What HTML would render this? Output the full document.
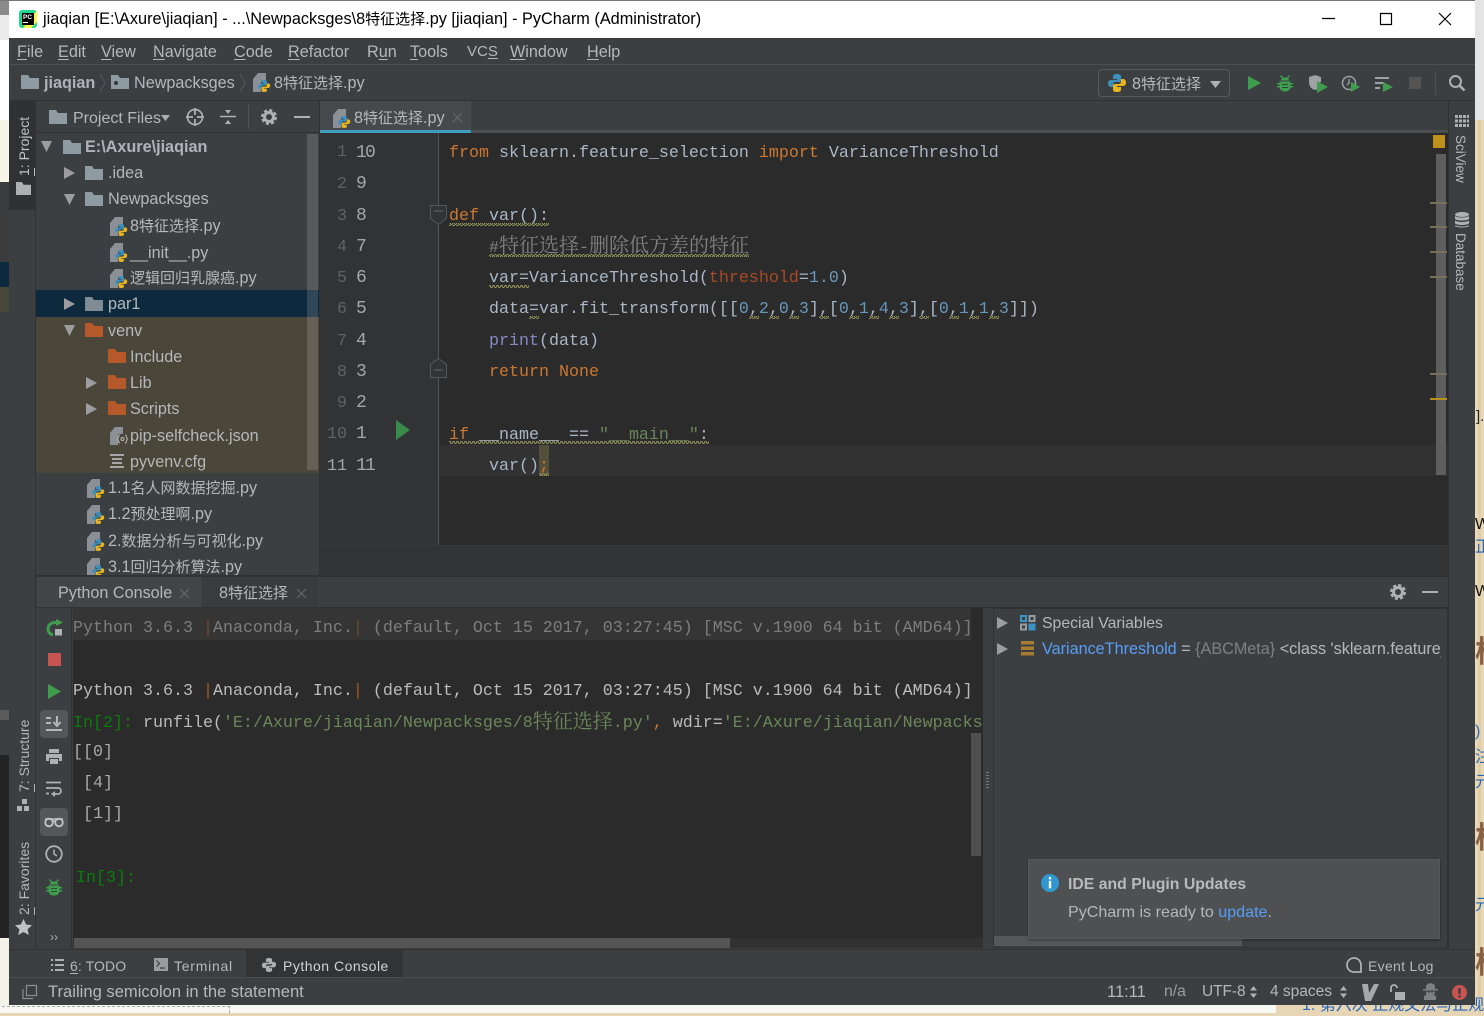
<!DOCTYPE html>
<html><head><meta charset="utf-8"><style>
html,body{margin:0;padding:0;width:1484px;height:1013px;overflow:hidden;background:#e6d6b6}
*{box-sizing:border-box}
.b{position:absolute}
.t{position:absolute;white-space:pre;height:20px;font:16.2px/20px "Liberation Sans","Noto Sans CJK SC",sans-serif;color:#b4b8ba}
.t b.z,.z{font-size:15px;font-weight:normal}
.m{position:absolute;white-space:pre;font:16.67px/20px "Liberation Mono","Noto Serif CJK SC",monospace;height:20px;color:#a9b7c6}
.m i{font:20px/20px "Noto Serif CJK SC",serif;font-style:normal;position:relative}
.r{font-size:18px;letter-spacing:-1.8px;color:#a4a6a8}
.k{color:#cc7832}.s{color:#6a8759}.c{color:#808080}.n{color:#6897bb}.p{color:#aa4926}.f{color:#8888c6}
.g{color:#0b7d0b}
u{text-underline-offset:2px}
svg.i{position:absolute;overflow:visible}
.v{position:absolute;writing-mode:vertical-rl;white-space:pre;font:14px/16px "Liberation Sans",sans-serif;color:#b4b8ba}
.l{transform:rotate(180deg)}
.e{position:absolute;white-space:pre;left:1476px;font:16px/20px "Liberation Sans","Noto Sans CJK SC",sans-serif;color:#2a66b8}
.h{position:absolute;left:1475px;font:bold 30px/30px "Noto Sans CJK SC",sans-serif;color:#8a6045;white-space:pre}
</style></head><body>
<svg width="0" height="0" style="position:absolute"><defs>
<symbol id="fo" viewBox="0 0 18 14"><path d="M0 0h7l2 3h9v11H0z" fill="currentColor"/></symbol>
<symbol id="ri" viewBox="0 0 11 12"><path d="M0 0l11 6-11 6z" fill="#9b9da0"/></symbol>
<symbol id="dn" viewBox="0 0 11 11"><path d="M0 0h11l-5.500 11z" fill="#9b9da0"/></symbol>
<symbol id="lo" viewBox="0 0 18 18"><path d="M9 0c-3 0-4 1-4 2.500V5h4v1H3C1 6 0 7.500 0 9.500S1 13 3 13h2v-2.500C5 9 6 8 7.500 8h4C12.500 8 13 7.200 13 6V2.500C13 1 12 0 9 0z" fill="#3d8fbd"/><path d="M9 18c3 0 4-1 4-2.500V13H9v-1h6c2 0 3-1.500 3-3.500S17 5 15 5h-2v2.500C13 9 12 10 10.500 10h-4C5.500 10 5 10.800 5 12v3.500C5 17 6 18 9 18z" fill="#e8b420"/></symbol>
<symbol id="py" viewBox="0 0 18 19"><path d="M0 6l5-6h8v8H8v11H0z" fill="#8b9096"/><use href="#lo" x="5" y="7" width="12.500" height="12"/></symbol>
<symbol id="ge" viewBox="0 0 16 16"><circle cx="8" cy="8" r="4.500" fill="none" stroke="#aeb1b3" stroke-width="3"/><circle cx="8" cy="8" r="6.800" fill="none" stroke="#aeb1b3" stroke-width="2.400" stroke-dasharray="3.200 2.140"/></symbol>
<symbol id="bug" viewBox="0 0 16 17"><path d="M4 0l2 2.500h4L12 0l1 1-2 2.500 1.500 2H3.500L5 3.500 3 1zM2.500 6.500h11V8H16v1.500h-2.500V11H16v1.500h-2.500c-.5 2.500-2.500 4-5.500 4s-5-1.500-5.500-4H0V11h2.500V9.500H0V8h2.500z" fill="#3f9e4d"/><path d="M5 9h6v1H5zM5 12h6v1H5z" fill="#2f4a36"/></symbol>
<pattern id="w" width="4" height="3" patternUnits="userSpaceOnUse"><path d="M0 2.500L1 .5 2 .5 3 2.500 4 2.500" fill="none" stroke="#98985a" stroke-width="1"/></pattern>
</defs></svg>

<!-- background -->
<div class="b" style="left:0;top:0;width:9px;height:1013px;background:#3c3f41"></div>
<div class="b" style="left:0;top:0;width:9px;height:15px;background:#8a8a8a"></div>
<div class="b" style="left:0;top:15px;width:9px;height:25px;background:#ececec"></div>
<div class="b" style="left:0;top:40px;width:9px;height:80px;background:#fff"></div>
<div class="b" style="left:0;top:120px;width:9px;height:62px;background:#f8f4e8"></div>
<div class="b" style="left:0;top:182px;width:9px;height:80px;background:#3a3c3e"></div>
<div class="b" style="left:0;top:262px;width:9px;height:25px;background:#0d293e"></div>
<div class="b" style="left:0;top:287px;width:9px;height:25px;background:#4b463a"></div>
<div class="b" style="left:0;top:710px;width:9px;height:10px;background:#5a5a5a"></div>
<div class="b" style="left:0;top:755px;width:9px;height:183px;background:#232425"></div>
<div class="b" style="left:0;top:938px;width:9px;height:75px;background:#f4f2e6"></div>
<div class="b" style="left:0;top:1005px;width:1276px;height:8px;background:#f8f8f2"></div>
<div class="b" style="left:2px;top:1006px;width:228px;height:7px;border-top:1px dashed #aaa;border-right:1px dashed #aaa"></div>
<div class="b" style="left:1276px;top:1005px;width:208px;height:8px;background:#e6d6b6"></div>
<div class="b" style="left:1475px;top:0;width:9px;height:120px;background:#e4e4e4"></div>
<div class="b" style="left:1475px;top:120px;width:9px;height:893px;background:repeating-linear-gradient(90deg,#e8d8b8 0 3px,#dfcfa9 3px 6px);overflow:hidden"></div>
<div class="e" style="top:407px;color:#222;left:1476px;font-size:15px">].</div>
<div class="e" style="top:515px;color:#111;left:1475px">W</div>
<div class="e" style="top:538px;left:1475px">正</div>
<div class="e" style="top:582px;color:#111;left:1475px">W</div>
<div class="h" style="top:634px">校</div>
<div class="e" style="top:722px;left:1475px">)</div>
<div class="e" style="top:748px;left:1475px">注</div>
<div class="e" style="top:773px;left:1475px">元</div>
<div class="h" style="top:820px">校</div>
<div class="e" style="top:896px;left:1475px">元</div>
<div class="h" style="top:945px">校</div>
<div class="t" style="left:1302px;top:996px;color:#2a66b8;font-size:16px">1. 第六次 正规文法与正规式</div>

<!-- window -->
<div class="b" style="left:9px;top:0;width:1466px;height:1005px;background:#3c3f41"></div>
<div class="b" style="left:9px;top:1px;width:1466px;height:37px;background:#fff"></div>
<div class="b" style="left:0;top:0;width:1475px;height:1px;background:#777"></div>
<svg class="i" style="left:19px;top:10px" width="18" height="18" viewBox="0 0 18 18"><rect x="0" y="0" width="18" height="18" rx="3" fill="#22d88f"/><path d="M18 0v12l-6 6H4z" fill="#fcf84a"/><rect x="3" y="3" width="12" height="12" fill="#000"/><text x="4" y="9" font-size="6.500" font-weight="bold" fill="#fff" font-family="Liberation Sans">PC</text><rect x="4" y="12" width="5" height="1" fill="#fff"/></svg>
<div class="t" style="left:43px;top:9px;color:#000;font-size:16.300px">jiaqian [E:\Axure\jiaqian] - ...\Newpacksges\8<span class="z">特征选择</span>.py [jiaqian] - PyCharm (Administrator)</div>
<svg class="i" style="left:1320px;top:10px" width="135" height="18"><path d="M2 8.500h13M60.500 3.500h11v11h-11zM119 3l12 12M131 3l-12 12" fill="none" stroke="#000" stroke-width="1.200"/></svg>

<!-- menu -->
<div class="b" style="left:9px;top:64px;width:1466px;height:1px;background:#4e4e4e"></div>
<div class="t" style="left:17px;top:42px"><u>F</u>ile</div>
<div class="t" style="left:58px;top:42px"><u>E</u>dit</div>
<div class="t" style="left:101px;top:42px"><u>V</u>iew</div>
<div class="t" style="left:153px;top:42px"><u>N</u>avigate</div>
<div class="t" style="left:234px;top:42px"><u>C</u>ode</div>
<div class="t" style="left:288px;top:42px"><u>R</u>efactor</div>
<div class="t" style="left:367px;top:42px">R<u>u</u>n</div>
<div class="t" style="left:410px;top:42px"><u>T</u>ools</div>
<div class="t" style="left:467px;top:42px;font-size:15px">VC<u>S</u></div>
<div class="t" style="left:510px;top:42px"><u>W</u>indow</div>
<div class="t" style="left:587px;top:42px"><u>H</u>elp</div>

<!-- nav bar -->
<div class="b" style="left:9px;top:100px;width:1466px;height:1px;background:#323232"></div>
<svg class="i" style="left:21px;top:75px;color:#8e9ba3" width="18" height="14"><use href="#fo"/></svg>
<div class="t" style="left:44px;top:73px;font-weight:bold;color:#aeb3b7">jiaqian</div>
<svg class="i" style="left:99px;top:73px" width="8" height="20"><path d="M1 1l5 9-5 9" fill="none" stroke="#55585a"/></svg>
<svg class="i" style="left:111px;top:75px;color:#8e9ba3" width="18" height="14"><use href="#fo"/><rect x="3" y="6" width="4" height="4" rx="2" fill="#33363a"/></svg>
<div class="t" style="left:134px;top:73px">Newpacksges</div>
<svg class="i" style="left:239px;top:73px" width="8" height="20"><path d="M1 1l5 9-5 9" fill="none" stroke="#55585a"/></svg>
<svg class="i" style="left:253px;top:73px" width="18" height="19"><use href="#py"/></svg>
<div class="t" style="left:274px;top:73px">8<span class="z">特征选择</span>.py</div>

<div class="b" style="left:1098px;top:69px;width:132px;height:28px;border:1px solid #565a5d;border-radius:4px"></div>
<svg class="i" style="left:1108px;top:74px" width="18" height="18"><use href="#lo"/></svg>
<div class="t" style="left:1132px;top:74px">8<span class="z">特征选择</span></div>
<svg class="i" style="left:1210px;top:81px" width="11" height="7"><path d="M0 0h11L5.500 7z" fill="#aeb1b3"/></svg>
<svg class="i" style="left:1248px;top:76px" width="13" height="14"><path d="M0 0l13 7-13 7z" fill="#3f9e4d"/></svg>
<svg class="i" style="left:1277px;top:75px" width="16" height="17"><use href="#bug"/></svg>
<svg class="i" style="left:1309px;top:75px" width="20" height="18"><path d="M0 2l6-2 6 2v5l-3 1v6L6 15C2 14 0 11 0 7z" fill="#9ea2a4"/><path d="M8 7l11 6-11 6z" transform="translate(0,-1)" fill="#3f9e4d"/></svg>
<svg class="i" style="left:1341px;top:75px" width="20" height="18"><circle cx="8" cy="8" r="6.500" fill="none" stroke="#9ea2a4" stroke-width="1.500"/><path d="M8 4v4l-2 2" stroke="#9ea2a4" fill="none" stroke-width="1.300"/><path d="M10 7l9 5-9 5z" fill="#3f9e4d"/></svg>
<svg class="i" style="left:1375px;top:76px" width="18" height="17"><path d="M0 1h14v2H0zM0 6h9v2H0zM0 11h5v2H0z" fill="#9ea2a4"/><path d="M8 6l10 5-10 5z" fill="#3f9e4d"/></svg>
<div class="b" style="left:1409px;top:77px;width:12px;height:12px;background:#545454"></div>
<div class="b" style="left:1435px;top:71px;width:1px;height:24px;background:#4e5153"></div>
<svg class="i" style="left:1448px;top:74px" width="18" height="18"><circle cx="7.500" cy="7.500" r="5.500" fill="none" stroke="#aeb1b3" stroke-width="2"/><path d="M11.500 11.500l5 5" stroke="#aeb1b3" stroke-width="2.500"/></svg>

<!-- left tool strip -->
<div class="b" style="left:9px;top:101px;width:27px;height:849px;background:#3c3f41;border-right:1px solid #323232"></div>
<div class="b" style="left:9px;top:101px;width:26px;height:109px;background:#2f3133"></div>
<div class="v l" style="left:16px;top:116px;height:60px;color:#c0c2c4"><u>1</u>: Project</div>
<svg class="i" style="left:16px;top:182px;color:#aeb1b3" width="15" height="13" viewBox="0 0 18 14" preserveAspectRatio="none"><use href="#fo"/></svg>
<div class="v l" style="left:16px;top:720px;height:72px"><u>7</u>: Structure</div>
<svg class="i" style="left:17px;top:799px" width="13" height="13"><path d="M5 0h5v5H5zM0 7h5v5H0zM7 7h5v5H7z" fill="#aeb1b3"/></svg>
<div class="v l" style="left:16px;top:845px;height:70px"><u>2</u>: Favorites</div>
<svg class="i" style="left:15px;top:919px" width="17" height="16"><path d="M8.500 0l2.600 5.500 5.900.700-4.400 4 1.200 5.800-5.300-3-5.300 3 1.200-5.800-4.400-4 5.900-.7z" fill="#c0c2c4"/></svg>

<!-- project header -->
<div class="b" style="left:36px;top:132px;width:284px;height:1px;background:#323232"></div>
<svg class="i" style="left:49px;top:110px;color:#8e9ba3" width="18" height="14"><use href="#fo"/></svg>
<div class="t" style="left:73px;top:109px;font-size:16px">Project Files</div>
<svg class="i" style="left:161px;top:115px" width="9" height="6"><path d="M0 0h9L4.500 6z" fill="#aeb1b3"/></svg>
<svg class="i" style="left:186px;top:108px" width="18" height="18"><circle cx="9" cy="9" r="7.500" fill="none" stroke="#aeb1b3" stroke-width="1.700"/><path d="M9 0v7M9 11v7M0 9h7M11 9h7" stroke="#aeb1b3" stroke-width="1.700"/></svg>
<svg class="i" style="left:220px;top:109px" width="16" height="16"><path d="M0 7.500h16" stroke="#aeb1b3" stroke-width="1.500"/><path d="M5 1h6l-3 4zM5 15h6l-3-4z" fill="#aeb1b3"/></svg>
<div class="b" style="left:248px;top:105px;width:1px;height:24px;background:#505355"></div>
<svg class="i" style="left:261px;top:109px" width="16" height="16"><use href="#ge"/></svg>
<div class="b" style="left:294px;top:116px;width:16px;height:2px;background:#aeb1b3"></div>

<!-- tree -->
<div class="b" style="left:36px;top:290px;width:283px;height:27px;background:#0d293e"></div>
<div class="b" style="left:36px;top:317px;width:283px;height:156px;background:#4b463a"></div>
<div class="b" style="left:307px;top:134px;width:11px;height:336px;background:rgba(255,255,255,.14)"></div>
<svg class="i" style="left:41px;top:141px" width="11" height="11"><use href="#dn"/></svg>
<svg class="i" style="left:63px;top:140px;color:#8e9ba3" width="18" height="14"><use href="#fo"/></svg>
<div class="t" style="left:85px;top:137px;font-weight:bold;color:#b0b4b8">E:\Axure\jiaqian</div>
<svg class="i" style="left:64px;top:167px" width="11" height="12"><use href="#ri"/></svg>
<svg class="i" style="left:85px;top:166px;color:#8e9ba3" width="18" height="14"><use href="#fo"/></svg>
<div class="t" style="left:108px;top:163px">.idea</div>
<svg class="i" style="left:64px;top:194px" width="11" height="11"><use href="#dn"/></svg>
<svg class="i" style="left:85px;top:192px;color:#8e9ba3" width="18" height="14"><use href="#fo"/></svg>
<div class="t" style="left:108px;top:189px">Newpacksges</div>
<svg class="i" style="left:110px;top:217px" width="18" height="19"><use href="#py"/></svg>
<div class="t" style="left:130px;top:216px">8<span class="z">特征选择</span>.py</div>
<svg class="i" style="left:110px;top:243px" width="18" height="19"><use href="#py"/></svg>
<div class="t" style="left:130px;top:243px">__init__.py</div>
<svg class="i" style="left:110px;top:269px" width="18" height="19"><use href="#py"/></svg>
<div class="t" style="left:130px;top:268px"><span class="z">逻辑回归乳腺癌</span>.py</div>
<svg class="i" style="left:64px;top:298px" width="11" height="12"><use href="#ri"/></svg>
<svg class="i" style="left:85px;top:297px;color:#7f8c94" width="18" height="14"><use href="#fo"/></svg>
<div class="t" style="left:108px;top:294px">par1</div>
<svg class="i" style="left:64px;top:325px" width="11" height="11"><use href="#dn"/></svg>
<svg class="i" style="left:85px;top:323px;color:#b5582a" width="18" height="14"><use href="#fo"/></svg>
<div class="t" style="left:108px;top:321px">venv</div>
<svg class="i" style="left:108px;top:349px;color:#b5582a" width="18" height="14"><use href="#fo"/></svg>
<div class="t" style="left:130px;top:347px">Include</div>
<svg class="i" style="left:86px;top:377px" width="11" height="12"><use href="#ri"/></svg>
<svg class="i" style="left:108px;top:375px;color:#b5582a" width="18" height="14"><use href="#fo"/></svg>
<div class="t" style="left:130px;top:373px">Lib</div>
<svg class="i" style="left:86px;top:403px" width="11" height="12"><use href="#ri"/></svg>
<svg class="i" style="left:108px;top:401px;color:#b5582a" width="18" height="14"><use href="#fo"/></svg>
<div class="t" style="left:130px;top:399px">Scripts</div>
<svg class="i" style="left:110px;top:427px" width="18" height="18"><path d="M0 6l5-6h8v7H8v11H0z" fill="#8b9096"/><path d="M10 8c-2 0-1 3-2.500 4 1.500 1 .5 4 2.500 4M15 8c2 0 1 3 2.500 4-1.500 1-.5 4-2.500 4" fill="none" stroke="#b8babb"/><circle cx="12.500" cy="12" r="1.500" fill="none" stroke="#b8babb"/></svg>
<div class="t" style="left:130px;top:426px">pip-selfcheck.json</div>
<svg class="i" style="left:110px;top:454px" width="14" height="14"><path d="M0 0h14v2H0zM2 4h10v2H2zM2 8h10v2H2zM0 12h14v2H0z" fill="#a4a6a7"/></svg>
<div class="t" style="left:130px;top:452px">pyvenv.cfg</div>
<svg class="i" style="left:87px;top:479px" width="18" height="19"><use href="#py"/></svg>
<div class="t" style="left:108px;top:478px">1.1<span class="z">名人网数据挖掘</span>.py</div>
<svg class="i" style="left:87px;top:505px" width="18" height="19"><use href="#py"/></svg>
<div class="t" style="left:108px;top:504px">1.2<span class="z">预处理啊</span>.py</div>
<svg class="i" style="left:87px;top:532px" width="18" height="19"><use href="#py"/></svg>
<div class="t" style="left:108px;top:531px">2.<span class="z">数据分析与可视化</span>.py</div>
<div class="b" style="left:87px;top:558px;width:18px;height:17px;overflow:hidden"><svg class="i" style="left:0;top:0" width="18" height="19"><use href="#py"/></svg></div>
<div class="b" style="left:36px;top:555px;width:283px;height:20px;overflow:hidden"><div class="t" style="left:72px;top:2px">3.1<span class="z">回归分析算法</span>.py</div></div>
<div class="b" style="left:36px;top:575px;width:1412px;height:2px;background:#323232"></div>

<!-- editor tabs -->
<div class="b" style="left:319px;top:101px;width:1px;height:474px;background:#323232"></div>
<div class="b" style="left:320px;top:101px;width:1128px;height:30px;background:#3c3f41"></div>
<div class="b" style="left:320px;top:101px;width:151px;height:29px;background:#46494c"></div>
<div class="b" style="left:320px;top:130px;width:1128px;height:3px;background:#4b4f51"></div>
<div class="b" style="left:320px;top:130px;width:151px;height:3px;background:#3f9dbf"></div>
<svg class="i" style="left:333px;top:109px" width="18" height="19"><use href="#py"/></svg>
<div class="t" style="left:354px;top:108px">8<span class="z">特征选择</span>.py</div>
<svg class="i" style="left:453px;top:113px" width="9" height="9"><path d="M0 0l9 9M9 0L0 9" stroke="#63676a" stroke-width="1.200"/></svg>

<!-- editor -->
<div class="b" style="left:320px;top:133px;width:1128px;height:412px;background:#2b2b2b"></div>
<div class="b" style="left:320px;top:133px;width:118px;height:412px;background:#313335"></div>
<div class="b" style="left:438px;top:133px;width:1px;height:412px;background:#555"></div>
<div class="b" style="left:439px;top:445px;width:1009px;height:31px;background:#323232"></div>
<div class="b" style="left:539px;top:445px;width:10px;height:31px;background:#52503a"></div>
<div class="b" style="left:320px;top:545px;width:1128px;height:30px;background:#313335;border-top:1px solid #3a3a3a"></div>

<div class="m" style="left:337px;top:143px;color:#606366">1</div><div class="m r" style="left:356px;top:143px">10</div>
<div class="m" style="left:337px;top:175px;color:#606366">2</div><div class="m r" style="left:356px;top:174px">9</div>
<div class="m" style="left:337px;top:207px;color:#606366">3</div><div class="m r" style="left:356px;top:206px">8</div>
<div class="m" style="left:337px;top:238px;color:#606366">4</div><div class="m r" style="left:356px;top:237px">7</div>
<div class="m" style="left:337px;top:269px;color:#606366">5</div><div class="m r" style="left:356px;top:268px">6</div>
<div class="m" style="left:337px;top:300px;color:#606366">6</div><div class="m r" style="left:356px;top:299px">5</div>
<div class="m" style="left:337px;top:332px;color:#606366">7</div><div class="m r" style="left:356px;top:331px">4</div>
<div class="m" style="left:337px;top:363px;color:#606366">8</div><div class="m r" style="left:356px;top:362px">3</div>
<div class="m" style="left:337px;top:394px;color:#606366">9</div><div class="m r" style="left:356px;top:393px">2</div>
<div class="m" style="left:327px;top:425px;color:#606366">10</div><div class="m r" style="left:356px;top:424px">1</div>
<div class="m" style="left:327px;top:457px;color:#a4a6a8">11</div><div class="m r" style="left:356px;top:456px">11</div>
<svg class="i" style="left:396px;top:420px" width="14" height="20"><path d="M0 0l14 10L0 20z" fill="#3a8a4c"/></svg>
<svg class="i" style="left:430px;top:205px" width="17" height="20"><path d="M.5.500h16v13l-8 6-8-6z" fill="#313335" stroke="#55585a"/><path d="M4 6h9" stroke="#66696b"/></svg>
<svg class="i" style="left:430px;top:358px" width="17" height="20"><path d="M.5 19.500h16v-13l-8-6-8 6z" fill="#313335" stroke="#55585a"/><path d="M4 12h9" stroke="#66696b"/></svg>

<div class="m" style="left:449px;top:144px"><span class="k">from</span> sklearn.feature_selection <span class="k">import</span> VarianceThreshold</div>
<div class="m" style="left:449px;top:207px"><span class="k">def</span> var():</div>
<div class="m c" style="left:489px;top:234px;color:#808080">#<i>特征选择</i>-<i>删除低方差的特征</i></div>
<div class="m" style="left:489px;top:269px">var=VarianceThreshold(<span class="p">threshold</span>=<span class="n">1.0</span>)</div>
<div class="m" style="left:489px;top:300px">data=var.fit_transform([[<span class="n">0</span>,<span class="n">2</span>,<span class="n">0</span>,<span class="n">3</span>],[<span class="n">0</span>,<span class="n">1</span>,<span class="n">4</span>,<span class="n">3</span>],[<span class="n">0</span>,<span class="n">1</span>,<span class="n">1</span>,<span class="n">3</span>]])</div>
<div class="m" style="left:489px;top:332px"><span class="f">print</span>(data)</div>
<div class="m" style="left:489px;top:363px"><span class="k">return None</span></div>
<div class="m" style="left:449px;top:426px"><span class="k">if</span> __name__ == <span class="s">"__main__"</span>:</div>
<div class="m" style="left:489px;top:457px">var()<span class="k">;</span></div>
<svg class="i" style="left:0;top:0" width="1484" height="1013">
<g fill="url(#w)"><rect x="449" y="223" width="100" height="3"/><rect x="489" y="254" width="260" height="3"/><rect x="489" y="285" width="40" height="3"/><rect x="529" y="316" width="10" height="3"/><rect x="749" y="316" width="10" height="3"/><rect x="769" y="316" width="10" height="3"/><rect x="789" y="316" width="10" height="3"/><rect x="819" y="316" width="10" height="3"/><rect x="849" y="316" width="10" height="3"/><rect x="869" y="316" width="10" height="3"/><rect x="889" y="316" width="10" height="3"/><rect x="919" y="316" width="10" height="3"/><rect x="949" y="316" width="10" height="3"/><rect x="969" y="316" width="10" height="3"/><rect x="989" y="316" width="10" height="3"/><rect x="449" y="441" width="260" height="3"/><rect x="539" y="473" width="10" height="3"/></g>
</svg>

<!-- marks -->
<div class="b" style="left:1433px;top:135px;width:12px;height:13px;background:#c0911a"></div>
<div class="b" style="left:1436px;top:154px;width:10px;height:321px;background:#5e5e5e"></div>
<div class="b" style="left:1430px;top:202px;width:17px;height:2px;background:#77715c"></div>
<div class="b" style="left:1430px;top:226px;width:17px;height:2px;background:#77715c"></div>
<div class="b" style="left:1430px;top:251px;width:17px;height:2px;background:#77715c"></div>
<div class="b" style="left:1430px;top:276px;width:17px;height:2px;background:#77715c"></div>
<div class="b" style="left:1430px;top:373px;width:17px;height:2px;background:#77715c"></div>
<div class="b" style="left:1430px;top:398px;width:17px;height:2px;background:#b8901c"></div>

<!-- right strip -->
<div class="b" style="left:1448px;top:101px;width:27px;height:849px;background:#3c3f41;border-left:1px solid #323232"></div>
<svg class="i" style="left:1455px;top:115px" width="14" height="13"><path d="M0 0h3v3H0zM4 0h3v3H4zM8 0h3v3H8zM12 0h2v3h-2zM0 4.500h3v3H0zM4 4.500h3v3H4zM8 4.500h3v3H8zM12 4.500h2v3h-2zM0 9h3v3H0zM4 9h3v3H4zM8 9h3v3H8zM12 9h2v3h-2z" fill="#aeb1b3"/></svg>
<div class="v" style="left:1452px;top:135px;height:46px;font-size:13.500px">SciView</div>
<svg class="i" style="left:1455px;top:212px" width="14" height="16"><ellipse cx="7" cy="2.500" rx="7" ry="2.500" fill="#aeb1b3"/><path d="M0 4c2 2 12 2 14 0v3c-2 2-12 2-14 0zM0 8.500c2 2 12 2 14 0v3c-2 2-12 2-14 0zM0 13c2 2 12 2 14 0v1c-2 2-12 2-14 0z" fill="#aeb1b3"/></svg>
<div class="v" style="left:1452px;top:233px;height:57px;font-size:13.500px">Database</div>

<!-- console tabs -->
<div class="b" style="left:37px;top:577px;width:1411px;height:31px;background:#3c3f41;border-bottom:1px solid #323232"></div>
<div class="b" style="left:37px;top:577px;width:164px;height:30px;background:#424548"></div>
<div class="b" style="left:202px;top:577px;width:116px;height:30px;background:#393b3d"></div>
<div class="t" style="left:58px;top:583px">Python Console</div>
<svg class="i" style="left:180px;top:589px" width="9" height="9"><path d="M0 0l9 9M9 0L0 9" stroke="#63676a" stroke-width="1.200"/></svg>
<div class="t" style="left:219px;top:583px">8<span class="z">特征选择</span></div>
<svg class="i" style="left:297px;top:589px" width="9" height="9"><path d="M0 0l9 9M9 0L0 9" stroke="#63676a" stroke-width="1.200"/></svg>
<svg class="i" style="left:1390px;top:584px" width="16" height="16"><use href="#ge"/></svg>
<div class="b" style="left:1422px;top:591px;width:16px;height:2px;background:#aeb1b3"></div>

<!-- console toolbar -->
<div class="b" style="left:36px;top:608px;width:36px;height:340px;background:#3c3f41;border-right:1px solid #323232"></div>
<svg class="i" style="left:46px;top:619px" width="18" height="18"><path d="M11 3.500C5 3 2 6 2 10c0 3 2 5 5 6" fill="none" stroke="#3f9e4d" stroke-width="3"/><path d="M10 0l7 3.500-7 3.500z" fill="#3f9e4d"/><rect x="9" y="10" width="7" height="6.500" fill="#aeb1b3"/></svg>
<div class="b" style="left:47.500px;top:653px;width:13px;height:13px;background:#c75450"></div>
<svg class="i" style="left:48px;top:684px" width="13" height="15"><path d="M0 0l13 7.500L0 15z" fill="#3f9e4d"/></svg>
<div class="b" style="left:40px;top:710px;width:28px;height:28px;background:#53575a;border-radius:4px"></div>
<svg class="i" style="left:46px;top:716px" width="17" height="16"><path d="M0 1h5v2H0zM0 6h5v2H0zM0 13h16v2H0z" fill="#b4b7b9"/><path d="M11 0v8M7.500 6l3.500 4 3.500-4" stroke="#b4b7b9" stroke-width="2" fill="none"/></svg>
<svg class="i" style="left:46px;top:749px" width="16" height="16"><path d="M3 0h10v4H3zM0 5h16v7h-3V9H3v3H0zM4 10h8v5H4z" fill="#aeb1b3"/></svg>
<svg class="i" style="left:46px;top:781px" width="16" height="17"><path d="M0 1.500h15M0 7h12c4 0 4 6 0 6H7" fill="none" stroke="#aeb1b3" stroke-width="1.800"/><path d="M9 10l-4 3 4 3z" fill="#aeb1b3"/><path d="M0 12.500h3" stroke="#aeb1b3" stroke-width="1.800"/></svg>
<div class="b" style="left:40px;top:808px;width:28px;height:28px;background:#53575a;border-radius:4px"></div>
<svg class="i" style="left:44px;top:817px" width="20" height="11"><circle cx="5" cy="5.500" r="3.800" fill="none" stroke="#c0c2c4" stroke-width="1.800"/><circle cx="15" cy="5.500" r="3.800" fill="none" stroke="#c0c2c4" stroke-width="1.800"/><path d="M1 2h18M9 4h2" stroke="#c0c2c4" stroke-width="1.500"/></svg>
<svg class="i" style="left:45px;top:845px" width="18" height="18"><circle cx="9" cy="9" r="7.800" fill="none" stroke="#aeb1b3" stroke-width="1.800"/><path d="M9 4.500V9l3 2" stroke="#aeb1b3" stroke-width="1.500" fill="none"/></svg>
<svg class="i" style="left:46px;top:879px" width="16" height="17"><use href="#bug"/></svg>
<div class="t" style="left:50px;top:927px;font-size:12px;color:#aeb1b3">››</div>

<!-- console -->
<div class="b" style="left:73px;top:608px;width:910px;height:340px;background:#2b2b2b;overflow:hidden"></div>
<div class="b" style="left:73px;top:608px;width:898px;height:32px;background:#353535"></div>
<div class="b" style="left:73px;top:608px;width:909px;height:340px;overflow:hidden">
<div class="m" style="left:0;top:11px;color:#7d7d7d">Python 3.6.3 <span style="color:#6b4a30">|</span>Anaconda, Inc.<span style="color:#6b4a30">|</span> (default, Oct 15 2017, 03:27:45) [MSC v.1900 64 bit (AMD64)]</div>
<div class="m" style="left:0;top:74px;color:#bbb">Python 3.6.3 <span style="color:#a05a28">|</span>Anaconda, Inc.<span style="color:#a05a28">|</span> (default, Oct 15 2017, 03:27:45) [MSC v.1900 64 bit (AMD64)]</div>
<div class="m" style="left:0;top:101px;color:#bbb"><span class="g">In[2]: </span>runfile(<span class="s">'E:/Axure/jiaqian/Newpacksges/8<i style="top:1px">特征选择</i>.py'</span><span class="k">,</span> wdir=<span class="s">'E:/Axure/jiaqian/Newpacksges'</span>)</div>
<div class="m" style="left:0;top:135px;color:#a9a9a9">[[0]</div>
<div class="m" style="left:0;top:166px;color:#a9a9a9"> [4]</div>
<div class="m" style="left:0;top:197px;color:#a9a9a9"> [1]]</div>
<div class="m g" style="left:3px;top:261px">In[3]:</div>
</div>
<div class="b" style="left:971px;top:733px;width:10px;height:123px;background:#4f4f4f"></div>
<div class="b" style="left:74px;top:938px;width:656px;height:10px;background:#4f4f4f"></div>
<div class="b" style="left:73px;top:938px;width:910px;height:10px;background:rgba(255,255,255,.03)"></div>

<!-- splitter + var panel -->
<div class="b" style="left:983px;top:608px;width:10px;height:340px;background:#3c3f41"></div>
<div class="b" style="left:986px;top:770px;width:3px;height:18px;background:repeating-linear-gradient(0deg,#777 0 1px,transparent 1px 3px)"></div>
<div class="b" style="left:993px;top:608px;width:455px;height:340px;background:#3c3f41;border:1px solid #323232"></div>
<svg class="i" style="left:997px;top:617px" width="11" height="12"><use href="#ri"/></svg>
<svg class="i" style="left:1020px;top:615px" width="16" height="16"><rect width="7" height="7" fill="#3a95c5"/><rect x="8.500" width="7" height="7" fill="#9a9da0"/><rect y="8.500" width="7" height="7" fill="#9a9da0"/><rect x="8.500" y="8.500" width="7" height="7" fill="#3a95c5"/><rect x="2" y="2" width="3" height="3" fill="#3c3f41"/><rect x="10.500" y="2" width="3" height="3" fill="#3c3f41"/><rect x="2" y="10.500" width="3" height="3" fill="#3c3f41"/></svg>
<div class="t" style="left:1042px;top:614px;font-size:15.800px">Special Variables</div>
<svg class="i" style="left:997px;top:643px" width="11" height="12"><use href="#ri"/></svg>
<svg class="i" style="left:1021px;top:641px" width="13" height="15"><path d="M0 0h13v3.500H0zM0 5.500h13V9H0zM0 11h13v3.500H0z" fill="#a67c30"/></svg>
<div class="b" style="left:1000px;top:639px;width:441px;height:20px;overflow:hidden"><div class="t" style="left:42px;top:0"><span style="color:#589df6">VarianceThreshold</span> = <span style="color:#808080">{ABCMeta}</span> &lt;class 'sklearn.feature_selection</div></div>
<div class="b" style="left:994px;top:936px;width:248px;height:10px;background:#55585a"></div>

<!-- notification -->
<div class="b" style="left:1028px;top:859px;width:412px;height:80px;background:#4e5052;border:1px solid #57595b;box-shadow:0 1px 3px rgba(0,0,0,.4)"></div>
<svg class="i" style="left:1041px;top:874px" width="18" height="18"><circle cx="9" cy="9" r="9" fill="#2f98d1"/><rect x="7.800" y="3" width="2.400" height="2.400" fill="#fff"/><rect x="7.800" y="6.800" width="2.400" height="7.500" fill="#fff"/></svg>
<div class="t" style="left:1068px;top:875px;font-weight:bold;font-size:15.800px;color:#b8babc">IDE and Plugin Updates</div>
<div class="t" style="left:1068px;top:902px;font-size:16.100px">PyCharm is ready to <span style="color:#589df6">update</span>.</div>

<!-- bottom tool bar -->
<div class="b" style="left:9px;top:949px;width:1466px;height:1px;background:#323232"></div>
<div class="b" style="left:9px;top:977px;width:1466px;height:1px;background:#4a4c4e"></div>
<svg class="i" style="left:51px;top:959px" width="13" height="12"><path d="M0 0h2v2H0zM4 0h9v2H4zM0 5h2v2H0zM4 5h9v2H4zM0 10h2v2H0zM4 10h9v2H4z" fill="#aeb1b3"/></svg>
<div class="t" style="left:70px;top:956px;font-size:14px;letter-spacing:.1px"><u>6</u>: TODO</div>
<svg class="i" style="left:154px;top:958px" width="14" height="13"><rect width="14" height="13" fill="#9a9da0"/><path d="M2.500 2.500l3 3-3 3M6 10h5" fill="none" stroke="#3c3f41" stroke-width="1.200"/></svg>
<div class="t" style="left:174px;top:956px;font-size:14px;letter-spacing:.75px">Terminal</div>
<div class="b" style="left:246px;top:950px;width:157px;height:27px;background:#313335"></div>
<svg class="i" style="left:262px;top:958px" width="14" height="14" viewBox="0 0 18 18"><path d="M9 0c-3 0-4 1-4 2.500V5h4v1H3C1 6 0 7.500 0 9.500S1 13 3 13h2v-2.500C5 9 6 8 7.500 8h4C12.500 8 13 7.200 13 6V2.500C13 1 12 0 9 0z" fill="#aeb1b3"/><path d="M9 18c3 0 4-1 4-2.500V13H9v-1h6c2 0 3-1.500 3-3.500S17 5 15 5h-2v2.500C13 9 12 10 10.500 10h-4C5.500 10 5 10.800 5 12v3.500C5 17 6 18 9 18z" fill="#aeb1b3"/></svg>
<div class="t" style="left:283px;top:956px;font-size:14px;letter-spacing:.5px;color:#d0d2d4">Python Console</div>
<svg class="i" style="left:1346px;top:957px" width="16" height="16"><path d="M15 15H7.500a7 7 0 1 1 7.500-7z" fill="none" stroke="#aeb1b3" stroke-width="1.800"/></svg>
<div class="t" style="left:1368px;top:956px;font-size:14px;letter-spacing:.3px">Event Log</div>

<!-- status -->
<svg class="i" style="left:22px;top:985px" width="15" height="14"><path d="M4.500.500h10v10h-10zM1 4v9.500h10" fill="none" stroke="#8a8d8f" stroke-width="1.200"/></svg>
<div class="t" style="left:48px;top:982px;font-size:16.600px">Trailing semicolon in the statement</div>
<div class="t" style="left:1107px;top:982px;font-size:16.500px">11:11</div>
<div class="t" style="left:1164px;top:982px;font-size:15.800px;color:#9a9da0">n/a</div>
<div class="t" style="left:1202px;top:982px;font-size:15.400px">UTF-8</div>
<svg class="i" style="left:1250px;top:986px" width="7" height="12"><path d="M3.500 0L7 4.500H0zM3.500 12L0 7.500h7z" fill="#aeb1b3"/></svg>
<div class="t" style="left:1270px;top:982px;font-size:15.500px">4 spaces</div>
<svg class="i" style="left:1340px;top:986px" width="7" height="12"><path d="M3.500 0L7 4.500H0zM3.500 12L0 7.500h7z" fill="#aeb1b3"/></svg>
<svg class="i" style="left:1362px;top:984px" width="17" height="17"><path d="M0 0h6l1 9 5-9h5l-8 17H3z" fill="#a6a8aa"/></svg>
<svg class="i" style="left:1390px;top:984px" width="16" height="16"><path d="M5 8h10v8H5z" fill="#aeb1b3"/><path d="M1 8V4a3 3 0 0 1 6 0" fill="none" stroke="#aeb1b3" stroke-width="1.800"/></svg>
<svg class="i" style="left:1423px;top:983px" width="15" height="17"><path d="M3 4c0-5 9-5 9 0v2H3zM0 6h15v1.500H0zM3 8.500h9c0 2-1 3-1.500 3.500l2.500 1v4H1v-4l2.500-1C3 11.500 3 10 3 8.500z" fill="#7e8183"/><path d="M5 9h2M8 9h2" stroke="#3c3f41"/></svg>
<svg class="i" style="left:1452px;top:985px" width="15" height="15"><circle cx="7.500" cy="7.500" r="7.500" fill="#c75450"/><rect x="6.300" y="3" width="2.400" height="6" fill="#3c3f41"/><rect x="6.300" y="10.200" width="2.400" height="2.200" fill="#3c3f41"/></svg>
</body></html>
